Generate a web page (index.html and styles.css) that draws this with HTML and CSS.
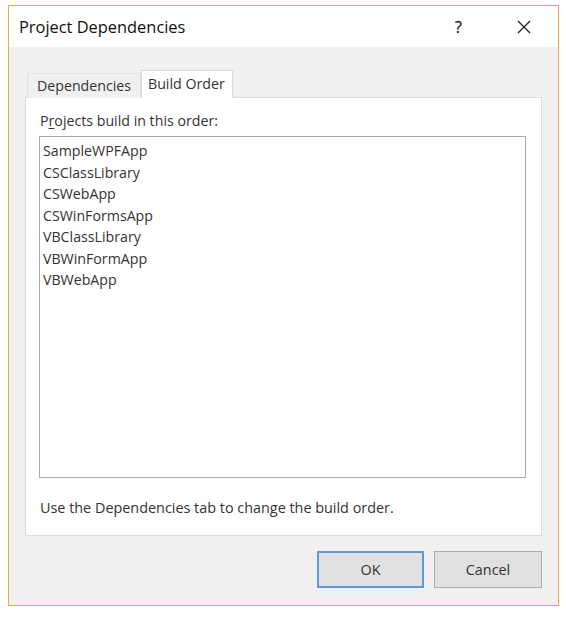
FILE: index.html
```html
<!DOCTYPE html>
<html lang="en">
<head>
<meta charset="utf-8">
<title>Project Dependencies</title>
<link rel="stylesheet" href="styles.css">
</head>
<body>
<div class="window">
  <div class="titlebar">
    <span class="title">Project Dependencies</span>
    <span class="help">?</span>
    <span class="close">
      <svg width="14" height="14" viewBox="0 0 14 14"><path d="M1 1 L13 13 M13 1 L1 13" stroke="#222" stroke-width="1.3" fill="none"/></svg>
    </span>
  </div>
  <div class="client">
    <div class="tabs">
      <div class="tab">Dependencies</div>
      <div class="tab active">Build Order</div>
    </div>
    <div class="panel">
      <div class="label">P<u>r</u>ojects build in this order:</div>
      <div class="listbox">
        <div class="item">SampleWPFApp</div>
        <div class="item">CSClassLibrary</div>
        <div class="item">CSWebApp</div>
        <div class="item">CSWinFormsApp</div>
        <div class="item">VBClassLibrary</div>
        <div class="item">VBWinFormApp</div>
        <div class="item">VBWebApp</div>
      </div>
      <div class="hint">Use the Dependencies tab to change the build order.</div>
    </div>
    <div class="buttons">
      <button class="btn default">OK</button>
      <button class="btn cancel">Cancel</button>
    </div>
  </div>
</div>
</body>
</html>
```

FILE: styles.css
```css
html, body {
  margin: 0;
  padding: 0;
  background: #ffffff;
}
body {
  padding: 5px 0 0 8px;
  font-family: "Open Sans", "Noto Sans", sans-serif;
  color: #333;
}
.window {
  box-sizing: border-box;
  width: 551px;
  height: 601px;
  border: 1px solid #e9a94c;
  display: flex;
  flex-direction: column;
  background: #f0f0f0;
}
.titlebar {
  height: 41px;
  background: #fff;
  display: flex;
  align-items: center;
  padding-left: 10px;
  flex: none;
}
.title {
  font-size: 16.4px;
  color: #111;
  flex: 1;
}
.help {
  font-size: 16px;
  color: #222;
  width: 14px;
  margin-right: 48px;
  -webkit-text-stroke: 0.3px #222;
}
.close {
  display: flex;
  margin-right: 27px;
}
.client {
  flex: 1;
  display: flex;
  flex-direction: column;
  padding: 23px 16px 0 16px;
}
.tabs {
  display: flex;
  align-items: flex-end;
  padding-left: 2px;
  margin-bottom: -1px;
  position: relative;
  z-index: 1;
  height: 28px;
}
.tab {
  box-sizing: border-box;
  height: 25px;
  padding: 0 9px;
  font-size: 14.2px;
  line-height: 24px;
  border: 1px solid #e2e2e2;
  border-bottom: none;
  background: #f0f0f0;
  width: 114px;
}
.tab.active {
  height: 28px;
  width: 92px;
  padding: 0 6px;
  line-height: 25px;
  background: #fff;
  border-color: #d9d9d9;
}
.panel {
  box-sizing: border-box;
  width: 517px;
  background: #fff;
  border: 1px solid #dcdcdc;
  padding: 13px 15px 17px 13px;
  display: flex;
  flex-direction: column;
}
.label {
  font-size: 14.2px;
  line-height: 20px;
  padding-left: 1px;
}
.label u {
  text-decoration-thickness: 1px;
  text-underline-offset: 2px;
}
.listbox {
  box-sizing: border-box;
  margin-top: 5px;
  height: 342px;
  border: 1px solid #ababab;
  padding: 3px 3px;
}
.item {
  font-size: 14.2px;
  line-height: 21.5px;
}
.hint {
  margin-top: 20px;
  font-size: 14.4px;
  line-height: 20px;
  padding-left: 1px;
}
.buttons {
  display: flex;
  justify-content: flex-end;
  gap: 10px;
  margin-top: 15px;
  padding-right: 0;
}
.btn {
  box-sizing: border-box;
  height: 37px;
  width: 108px;
  background: #e1e1e1;
  border: 1px solid #adadad;
  font-family: "Open Sans", "Noto Sans", sans-serif;
  font-size: 14.4px;
  color: #333;
  padding: 0;
}
.btn.default {
  width: 107px;
  border: 2px solid #5a9bdb;
}
```
